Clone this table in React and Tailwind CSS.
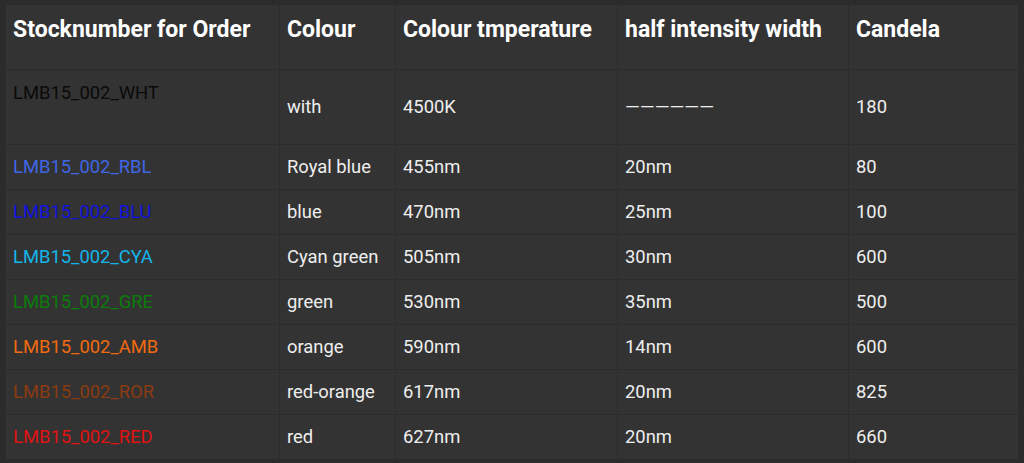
const rows = [
  { code: "LMB15_002_RBL", color: "text-[#3f66e6]", colour: "Royal blue", temp: "455nm", half: "20nm", cd: "80" },
  { code: "LMB15_002_BLU", color: "text-[#1212dc]", colour: "blue", temp: "470nm", half: "25nm", cd: "100" },
  { code: "LMB15_002_CYA", color: "text-[#14b6ea]", colour: "Cyan green", temp: "505nm", half: "30nm", cd: "600" },
  { code: "LMB15_002_GRE", color: "text-[#0a7d0a]", colour: "green", temp: "530nm", half: "35nm", cd: "500" },
  { code: "LMB15_002_AMB", color: "text-[#f26a10]", colour: "orange", temp: "590nm", half: "14nm", cd: "600" },
  { code: "LMB15_002_ROR", color: "text-[#8c3a10]", colour: "red-orange", temp: "617nm", half: "20nm", cd: "825" },
  { code: "LMB15_002_RED", color: "text-[#e01212]", colour: "red", temp: "627nm", half: "20nm", cd: "660" },
];

export default function App() {
  const cell = "border border-[#2c2c2c] pl-[7px] pr-2 align-middle";
  const head = "border border-[#2c2c2c] pl-[7px] pr-2 pt-[8px] align-top text-left text-[23px] font-bold text-white";

  return (
    <div className="min-h-screen bg-[#2b2b2b] px-[5px] py-[4px] font-['Roboto',sans-serif]">
      <table className="w-[1013px] border-collapse bg-[#333333] text-[18.4px] text-[#eeeeee] table-fixed">
        <colgroup>
          <col className="w-[274px]" />
          <col className="w-[116px]" />
          <col className="w-[222px]" />
          <col className="w-[231px]" />
          <col className="w-[170px]" />
        </colgroup>
        <thead>
          {/* Header row */}
          <tr className="h-[65px]">
            <th className={head}>Stocknumber for Order</th>
            <th className={head}>Colour</th>
            <th className={head}>Colour tmperature</th>
            <th className={head}>half intensity width</th>
            <th className={head}>Candela</th>
          </tr>
        </thead>
        <tbody>
          <tr className="h-[75px]">
            <td className="border border-[#2c2c2c] pl-[7px] pr-2 pt-[9px] align-top text-[#0a0a0a]">LMB15_002_WHT</td>
            <td className={cell}>with</td>
            <td className={cell}>4500K</td>
            <td className={cell}><span className="text-[19px]">——————</span></td>
            <td className={cell}>180</td>
          </tr>
          {rows.map((r) => (
            <tr key={r.code} className="h-[45px]">
              <td className={`${cell} ${r.color}`}>{r.code}</td>
              <td className={cell}>{r.colour}</td>
              <td className={cell}>{r.temp}</td>
              <td className={cell}>{r.half}</td>
              <td className={cell}>{r.cd}</td>
            </tr>
          ))}
        </tbody>
      </table>
    </div>
  );
}
